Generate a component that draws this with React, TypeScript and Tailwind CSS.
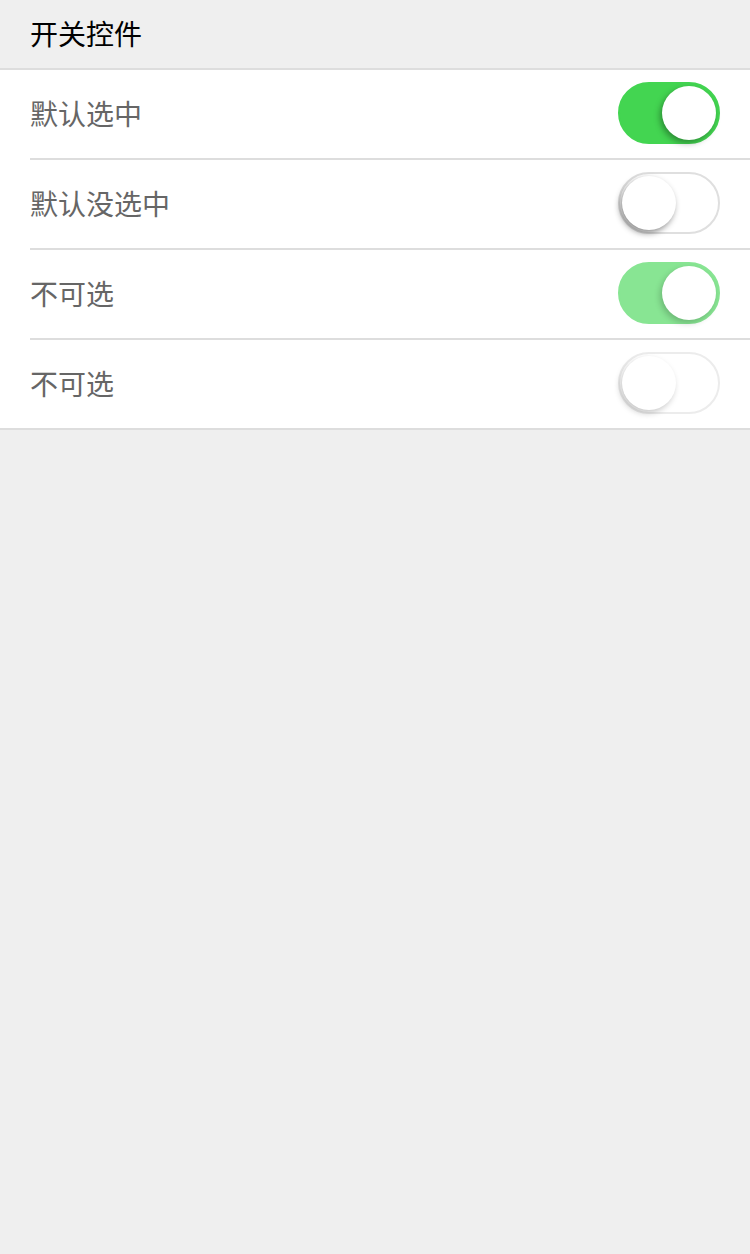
import React from 'react';

type SwitchProps = { checked: boolean; disabled?: boolean };

const Switch: React.FC<SwitchProps> = ({ checked, disabled }) => {
  let track = 'bg-white border-[#dfdfdf]';
  if (checked) track = disabled ? 'bg-[#88e593] border-[#88e593]' : 'bg-[#43d551] border-[#43d551]';
  else if (disabled) track = 'bg-white border-[#ececec]';

  let knob = 'left-[2px] shadow-[-2px_3px_6px_rgba(0,0,0,0.45)]';
  if (checked) knob = disabled ? 'left-[42px] shadow-[-2px_3px_6px_rgba(0,0,0,0.2)]' : 'left-[42px] shadow-[-2px_3px_6px_rgba(0,0,0,0.35)]';
  else if (disabled) knob = 'left-[2px] shadow-[-2px_3px_6px_rgba(0,0,0,0.22)]';

  return (
    <div className={'relative w-[102px] h-[62px] rounded-full border-2 ' + track}>
      <div className={'absolute top-[2px] w-[54px] h-[54px] rounded-full bg-white ' + knob} />
    </div>
  );
};

const rows = [
  { label: '默认选中', checked: true, disabled: false },
  { label: '默认没选中', checked: false, disabled: false },
  { label: '不可选', checked: true, disabled: true },
  { label: '不可选', checked: false, disabled: true },
];

export default function App() {
  return (
    <div
      className="min-h-[1254px] w-[750px] bg-[#efefef]"
      style={{ fontFamily: '"Noto Sans CJK SC", "Noto Sans", sans-serif' }}
    >
      <div className="h-[68px] flex items-center px-[30px] pb-[2px] text-[28px] text-black">开关控件</div>
      <div className="bg-white border-y-2 border-[#dddddd]">
        {rows.map((r, i) => (
          <div key={i} className="pl-[30px]">
            <div
              className={
                'flex items-center justify-between pr-[30px] ' +
                (i < rows.length - 1 ? 'h-[90px] border-b-2 border-[#dddddd] pb-[2px]' : 'h-[88px] pb-[2px]')
              }
            >
              <span className="text-[28px] text-[#666666]">{r.label}</span>
              <Switch checked={r.checked} disabled={r.disabled} />
            </div>
          </div>
        ))}
      </div>
    </div>
  );
}
